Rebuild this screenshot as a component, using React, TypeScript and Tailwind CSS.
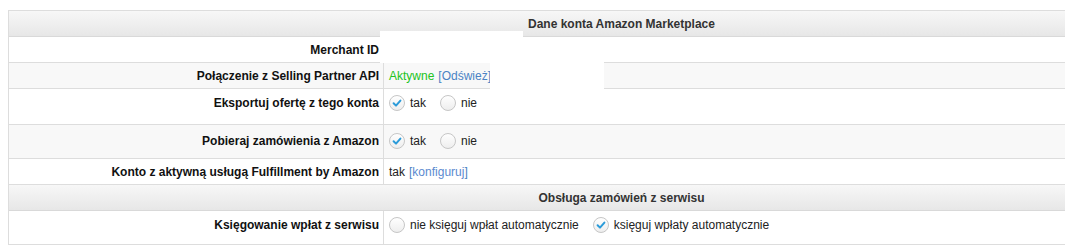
import React from "react";

function Radio({ checked }: { checked?: boolean }) {
  return (
    <svg width="16" height="16" viewBox="0 0 16 16" className="shrink-0">
      <defs>
        <linearGradient id="rg" x1="0" y1="0" x2="0" y2="1">
          <stop offset="0" stopColor="#ffffff" />
          <stop offset="1" stopColor="#ededed" />
        </linearGradient>
      </defs>
      <circle cx="8" cy="8" r="7.5" fill="url(#rg)" stroke="#c6c6c6" />
      {checked && (
        <path
          d="M4.6 8.3 L7 10.6 L11.4 5.6"
          stroke="#2b9bd9"
          strokeWidth="2"
          fill="none"
          strokeLinecap="round"
          strokeLinejoin="round"
        />
      )}
    </svg>
  );
}

function Option({ checked, label, last }: { checked?: boolean; label: string; last?: boolean }) {
  return (
    <span className={`flex items-center gap-[5px] ${last ? "" : "mr-[14px]"}`}>
      <Radio checked={checked} />
      <span>{label}</span>
    </span>
  );
}

interface RowProps {
  label: string;
  height: string;
  tall?: string;
  gray?: boolean;
  children?: React.ReactNode;
}

function Row({ label, height, tall, gray, children }: RowProps) {
  const align = tall ? `items-start ${tall}` : "items-center";
  return (
    <div className={`grid grid-cols-[375px_1fr] border-b border-[#dddddd] ${height} ${gray ? "bg-[#f8f8f8]" : "bg-white"}`}>
      <div className={`flex justify-end pr-[4px] border-r border-[#dddddd] font-bold text-[#111] ${align}`}>
        {label}
      </div>
      <div className={`flex pl-[5px] text-[#222] ${align}`}>{children}</div>
    </div>
  );
}

function Header({ title }: { title: string }) {
  return (
    <div className="h-[26px] flex items-center justify-center border-b border-[#d9d9d9] bg-gradient-to-b from-[#f7f7f7] to-[#e7e7e7] font-bold text-[#333]">
      {title}
    </div>
  );
}

export default function App() {
  return (
    <div className="relative w-[1065px] h-[245px] overflow-hidden bg-white font-['Liberation_Sans',Arial,sans-serif] text-[12px] leading-4">
      <div className="pt-[10px] pl-[8px]">
        <div className="w-[1226px] border-l border-t border-[#dddddd]">
          <Header title="Dane konta Amazon Marketplace" />
          <Row label="Merchant ID" height="h-[26px]" />
          <Row label="Połączenie z Selling Partner API" height="h-[26px]" gray>
            <span className="text-[#22c322]">Aktywne</span>
            <span className="ml-[4px] text-[#4a83c4]">[Odśwież]</span>
          </Row>
          <Row label="Eksportuj ofertę z tego konta" height="h-[36px]" tall="pt-[6px]">
            <Option checked label="tak" />
            <Option label="nie" last />
          </Row>
          <Row label="Pobieraj zamówienia z Amazon" height="h-[34px]" tall="pt-[8px]" gray>
            <Option checked label="tak" />
            <Option label="nie" last />
          </Row>
          <Row label="Konto z aktywną usługą Fulfillment by Amazon" height="h-[26px]">
            <span>tak</span>
            <span className="ml-[4px] text-[#4a83c4]">
              [<span className="text-[#5b8ad0]">konfiguruj</span>]
            </span>
          </Row>
          <Header title="Obsługa zamówień z serwisu" />
          <Row label="Księgowanie wpłat z serwisu" height="h-[34px]" tall="pt-[6px]">
            <Option label="nie księguj wpłat automatycznie" />
            <Option checked label="księguj wpłaty automatycznie" last />
          </Row>
        </div>
      </div>
      {/* blanked-out fields */}
      <div className="absolute left-[380px] top-[31px] w-[143px] h-[32px] bg-white" />
      <div className="absolute left-[490px] top-[62px] w-[114px] h-[27px] bg-white" />
    </div>
  );
}
